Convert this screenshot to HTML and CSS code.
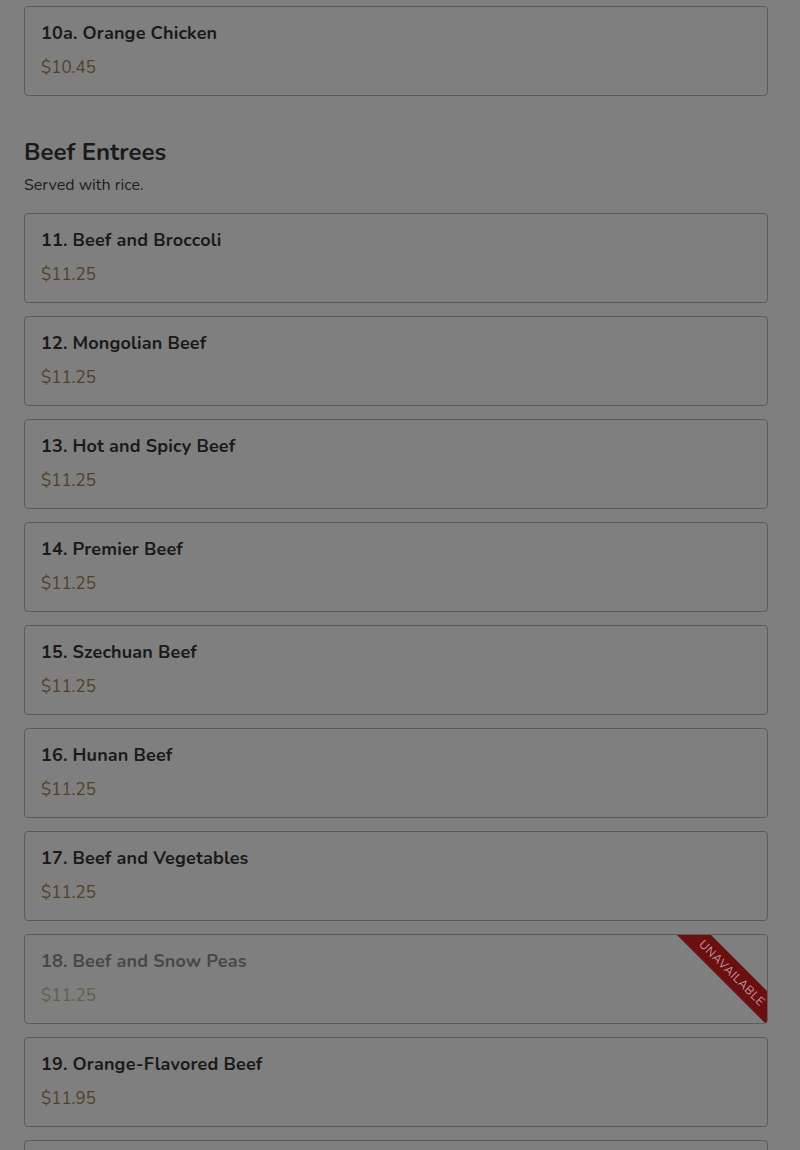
FILE: index.html
```html
<!DOCTYPE html>
<html>
<head>
<meta charset="utf-8">
<link rel="stylesheet" href="styles.css">
</head>
<body>
<main class="menu">
  <section class="section">
    <div class="items">
      <div class="item"><div class="item-name">10a. Orange Chicken</div><div class="item-price">$10.45</div></div>
    </div>
  </section>
  <section class="section">
    <h2 class="section-title">Beef Entrees</h2>
    <p class="section-desc">Served with rice.</p>
    <div class="items">
      <div class="item"><div class="item-name">11. Beef and Broccoli</div><div class="item-price">$11.25</div></div>
      <div class="item"><div class="item-name">12. Mongolian Beef</div><div class="item-price">$11.25</div></div>
      <div class="item"><div class="item-name">13. Hot and Spicy Beef</div><div class="item-price">$11.25</div></div>
      <div class="item"><div class="item-name">14. Premier Beef</div><div class="item-price">$11.25</div></div>
      <div class="item"><div class="item-name">15. Szechuan Beef</div><div class="item-price">$11.25</div></div>
      <div class="item"><div class="item-name">16. Hunan Beef</div><div class="item-price">$11.25</div></div>
      <div class="item"><div class="item-name">17. Beef and Vegetables</div><div class="item-price">$11.25</div></div>
      <div class="item unavailable"><div class="item-name">18. Beef and Snow Peas</div><div class="item-price">$11.25</div><div class="ribbon">Unavailable</div></div>
      <div class="item"><div class="item-name">19. Orange-Flavored Beef</div><div class="item-price">$11.95</div></div>
      <div class="item"><div class="item-name">20. Kung Pao Beef</div><div class="item-price">$11.25</div></div>
    </div>
  </section>
</main>
</body>
</html>
```
FILE: styles.css
```css
html, body {
  margin: 0;
  padding: 0;
  background: #7f7f7f;
}
body {
  font-family: "Nunito", Lato, "Noto Sans", sans-serif;
  color: #1c1c1c;
}
.menu {
  padding: 6px 32px 0 24px;
}
.items {
  display: flex;
  flex-direction: column;
  gap: 13px;
}
.section-title {
  margin: 40px 0 5px;
  font-size: 24px;
  line-height: 32px;
  font-weight: 700;
  color: #1a1a1a;
}
.section-desc {
  margin: 0 0 16px;
  font-size: 16px;
  line-height: 24px;
  color: #202020;
}
.item {
  position: relative;
  overflow: hidden;
  border: 1px solid #5c5c5c;
  border-radius: 4px;
  padding: 15px 16px;
  height: 58px;
}
.item-name {
  font-size: 18px;
  line-height: 22px;
  font-weight: 700;
  letter-spacing: 0.15px;
  color: #1a1a1a;
}
.item-price {
  margin-top: 12px;
  font-size: 17px;
  line-height: 24px;
  color: #524229;
}
.unavailable .item-name {
  color: #484848;
}
.unavailable .item-price {
  color: #645e4a;
}
.ribbon {
  position: absolute;
  top: 26px;
  right: -35px;
  width: 140px;
  height: 24px;
  line-height: 24px;
  background: #6c0f11;
  color: #bb9c9c;
  font-size: 12px;
  text-transform: uppercase;
  letter-spacing: 0.5px;
  text-align: center;
  transform: rotate(45deg);
}
```
